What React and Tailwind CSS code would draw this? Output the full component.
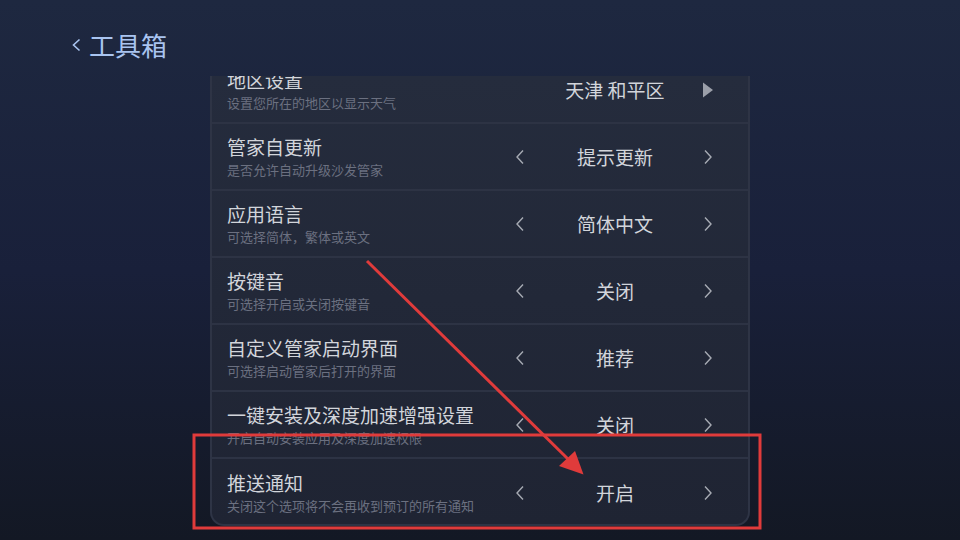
import React from "react";

const rows = [
  { t: "地区设置", s: "设置您所在的地区以显示天气", v: "天津 和平区", tri: true },
  { t: "管家自更新", s: "是否允许自动升级沙发管家", v: "提示更新" },
  { t: "应用语言", s: "可选择简体，繁体或英文", v: "简体中文" },
  { t: "按键音", s: "可选择开启或关闭按键音", v: "关闭" },
  { t: "自定义管家启动界面", s: "可选择启动管家后打开的界面", v: "推荐" },
  { t: "一键安装及深度加速增强设置", s: "开启自动安装应用及深度加速权限", v: "关闭" },
  { t: "推送通知", s: "关闭这个选项将不会再收到预订的所有通知", v: "开启", last: true },
];

function Chev({ dir }) {
  return (
    <svg width="10" height="16" viewBox="0 0 10 16">
      <polyline
        points={dir === "l" ? "8,1.5 2,8 8,14.5" : "2,1.5 8,8 2,14.5"}
        fill="none"
        stroke="#a7abb4"
        strokeWidth="1.4"
      />
    </svg>
  );
}

function Row({ r }) {
  return (
    <div
      className={`flex h-[67px] items-center pl-[15px] pr-[27px] ${
        r.last ? "" : "border-b-2 border-[#2d3344]"
      }`}
    >
      <div className="flex flex-1 flex-col gap-[2px]">
        <div className="text-[19px] leading-[24px] text-[#d2d5db]">{r.t}</div>
        <div className="text-[13px] leading-[17px] text-[#6b7080]">{r.s}</div>
      </div>
      <div className="flex w-[216px] items-center">
        <div className="flex w-[30px] justify-center">{r.tri ? null : <Chev dir="l" />}</div>
        <div className="w-[160px] text-center text-[19px] leading-6 text-[#d2d5db]">{r.v}</div>
        <div className="flex w-[26px] justify-center">
          {r.tri ? (
            <svg width="12" height="16" viewBox="0 0 12 16">
              <polygon points="1,0.5 11,8 1,15.5" fill="#9b9fa9" />
            </svg>
          ) : (
            <Chev dir="r" />
          )}
        </div>
      </div>
    </div>
  );
}

export default function App() {
  return (
    <div
      className="relative h-[540px] w-[960px] overflow-hidden bg-gradient-to-b from-[#1e2840] via-[#19203a] to-[#131824]"
      style={{ fontFamily: '"Noto Sans CJK SC", "Noto Sans", sans-serif' }}
    >
      <div className="flex h-[76px] items-start pl-[72px] pt-[29px]">
        <div className="flex items-center gap-[8px] text-[26px] leading-8 text-[#a9c4f0]">
          <svg width="9" height="16" viewBox="0 0 9 16">
            <polyline points="7.5,2.5 1.5,8 7.5,13.5" fill="none" stroke="#a9c4f0" strokeWidth="1.6" />
          </svg>
          <span>工具箱</span>
        </div>
      </div>
      <div className="ml-[210px] h-[450px] w-[540px] overflow-hidden rounded-b-[14px] border-2 border-t-0 border-[#2e3445] bg-gradient-to-b from-[#252c3d] to-[#1f2433]">
        <div className="-mt-[19px]">
          {rows.map((r, i) => (
            <Row key={i} r={r} />
          ))}
        </div>
      </div>
      <svg className="pointer-events-none absolute left-0 top-0" width="960" height="540">
        <rect x="194" y="435" width="566" height="93" fill="none" stroke="#e03b3b" strokeWidth="3" />
        <line x1="367" y1="261" x2="570" y2="461" stroke="#e03b3b" strokeWidth="3" />
        <polygon points="583.5,474.5 559,466 575,451" fill="#e03b3b" />
      </svg>
    </div>
  );
}
